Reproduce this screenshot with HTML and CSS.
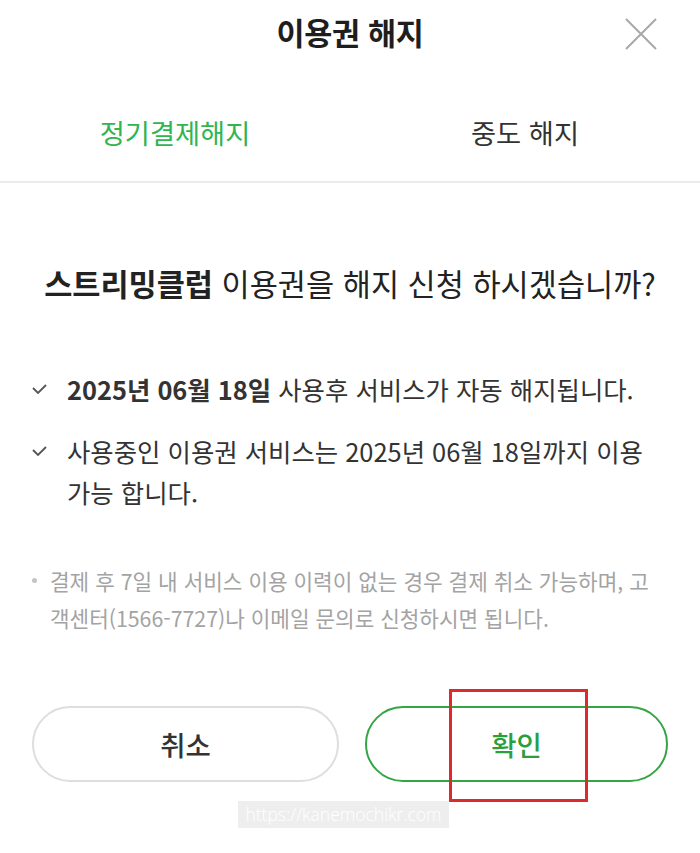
FILE: index.html
```html
<!DOCTYPE html>
<html lang="ko">
<head>
<meta charset="utf-8">
<title>이용권 해지</title>
<link rel="stylesheet" href="styles.css">
</head>
<body>
<div class="sheet">
  <header class="sheet-head">
    <h1 class="sheet-title">이용권 해지</h1>
    <button class="close-btn" type="button" aria-label="닫기">
      <svg width="32" height="32" viewBox="0 0 32 32" aria-hidden="true">
        <path d="M1 1 L31 31 M31 1 L1 31" stroke="#a8a8a8" stroke-width="2" fill="none"/>
      </svg>
    </button>
  </header>

  <nav class="tabs">
    <div class="tab tab-active">정기결제해지</div>
    <div class="tab">중도 해지</div>
  </nav>

  <section class="content">
    <p class="question"><strong>스트리밍클럽</strong> 이용권을 해지 신청 하시겠습니까?</p>

    <ul class="checks">
      <li class="check-item">
        <svg class="check-icon" width="15" height="10" viewBox="0 0 15 10" aria-hidden="true">
          <polyline points="1,4 6,9 14,1" fill="none" stroke="#555" stroke-width="1.8"/>
        </svg>
        <span><b>2025년 06월 18일</b> 사용후 서비스가 자동 해지됩니다.</span>
      </li>
      <li class="check-item">
        <svg class="check-icon" width="15" height="10" viewBox="0 0 15 10" aria-hidden="true">
          <polyline points="1,4 6,9 14,1" fill="none" stroke="#555" stroke-width="1.8"/>
        </svg>
        <span>사용중인 이용권 서비스는 2025년 06월 18일까지 이용 가능 합니다.</span>
      </li>
    </ul>

    <p class="note">결제 후 7일 내 서비스 이용 이력이 없는 경우 결제 취소 가능하며, 고객센터(1566-7727)나 이메일 문의로 신청하시면 됩니다.</p>
  </section>

  <div class="actions">
    <button class="pill pill-cancel" type="button">취소</button>
    <div class="confirm-wrap">
      <button class="pill pill-confirm" type="button">확인</button>
      <span class="highlight-box"></span>
    </div>
  </div>

  <div class="source-tag">https://kanemochikr.com</div>
</div>
</body>
</html>
```

FILE: styles.css
```css
* {
  box-sizing: border-box;
}

html, body {
  margin: 0;
  padding: 0;
  background: #ffffff;
}

body {
  font-family: "Noto Sans CJK KR", "Noto Sans", sans-serif;
  color: #222;
}

.sheet {
  width: 700px;
}

/* header: centered title, close icon at the right */
.sheet-head {
  display: grid;
  grid-template-columns: 1fr auto 1fr;
  align-items: center;
  height: 68px;
}

.sheet-title {
  grid-column: 2;
  margin: 0 0 4px;
  font-size: 30.5px;
  font-weight: 700;
  line-height: 64px;
  color: #1e1e1e;
  letter-spacing: -0.3px;
}

.close-btn {
  grid-column: 3;
  justify-self: end;
  margin-right: 43px;
  width: 32px;
  height: 32px;
  padding: 0;
  border: 0;
  background: none;
  display: flex;
}

/* tabs */
.tabs {
  display: flex;
  border-bottom: 2px solid #ebebeb;
}

.tab {
  flex: 1;
  text-align: center;
  font-size: 27.3px;
  line-height: 40px;
  padding: 44px 0 29px;
  color: #333;
}

.tab-active {
  color: #2fb552;
}

/* body copy */
.content {
  padding: 80px 32px 0;
}

.question {
  margin: 0;
  text-align: center;
  font-size: 30.6px;
  line-height: 40px;
  color: #222;
  white-space: nowrap;
}

.question strong {
  font-weight: 700;
}

.checks {
  list-style: none;
  margin: 66px 0 0;
  padding: 0;
}

.check-item {
  display: flex;
  align-items: flex-start;
  gap: 20px;
  font-size: 25.4px;
  line-height: 41px;
  color: #333;
}

.check-item + .check-item {
  margin-top: 21px;
}

.check-item b {
  font-weight: 700;
}

.check-icon {
  flex: none;
  margin-top: 15px;
}

.note {
  position: relative;
  margin: 49px 0 0;
  padding-left: 18px;
  font-size: 21.3px;
  line-height: 37px;
  color: #a3a3a3;
  word-break: break-all;
}

.note::before {
  content: "";
  position: absolute;
  left: 0;
  top: 16px;
  width: 5px;
  height: 5px;
  border-radius: 50%;
  background: #c4c4c4;
}

/* buttons */
.actions {
  display: flex;
  gap: 26px;
  padding: 70px 32px 0;
}

.pill {
  height: 76px;
  border-radius: 38px;
  background: #fff;
  font-family: inherit;
  font-size: 27.5px;
  font-weight: 500;
  padding: 0;
  width: 100%;
}

.pill-cancel {
  flex: 1;
  border: 2px solid #dedede;
  color: #333;
}

.confirm-wrap {
  flex: 1;
  position: relative;
  display: flex;
}

.pill-confirm {
  border: 2px solid #34a646;
  color: #2b9f40;
}

/* annotation frame laid over the confirm button */
.highlight-box {
  position: absolute;
  left: 84px;
  top: -17px;
  width: 139px;
  height: 113px;
  border: 3px solid #dc2a2f;
  pointer-events: none;
}

.source-tag {
  margin: 19px 0 0 238px;
  width: 211px;
  height: 27px;
  background: #eeeeee;
  color: #ffffff;
  font-family: "Open Sans", sans-serif;
  font-size: 17.5px;
  font-weight: 300;
  line-height: 27px;
  white-space: nowrap;
  text-align: center;
}
```
